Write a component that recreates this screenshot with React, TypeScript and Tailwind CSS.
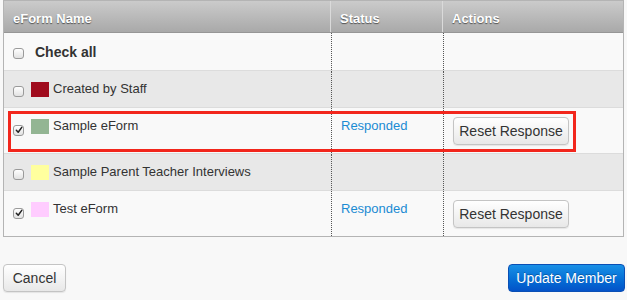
import React from "react";

function Check({ checked }: { checked?: boolean }) {
  return (
    <span className="inline-flex w-[11px] h-[11px] rounded-[3px] border border-[#9a9a9a] bg-gradient-to-b from-[#ffffff] to-[#e2e2e2] items-center justify-center shrink-0">
      {checked && (
        <svg width="8" height="8" viewBox="0 0 9 9">
          <path d="M1.5 4.8 L3.6 7 L7.6 1.6" fill="none" stroke="#222" strokeWidth="1.7" strokeLinecap="round" strokeLinejoin="round" />
        </svg>
      )}
    </span>
  );
}

type Row = { name: string; color?: string; checked?: boolean; responded?: boolean; bold?: boolean; alt?: boolean };

const rows: Row[] = [
  { name: "Check all", bold: true },
  { name: "Created by Staff", color: "#a00b1d", alt: true },
  { name: "Sample eForm", color: "#93b593", checked: true, responded: true },
  { name: "Sample Parent Teacher Interviews", color: "#ffff9e", alt: true },
  { name: "Test eForm", color: "#ffccff", checked: true, responded: true },
];

function ResetBtn() {
  return (
    <button className="h-[28px] w-[116px] rounded-[4px] border border-[#c4c4c4] bg-gradient-to-b from-[#ffffff] to-[#e8e8e8] text-[14px] text-[#333] shadow-[0_1px_1px_rgba(0,0,0,0.08)]">
      Reset Response
    </button>
  );
}

export default function App() {
  return (
    <div className="w-[627px] h-[300px] bg-[#f8f8f8] pl-[3px] font-['Liberation_Sans',Arial,sans-serif] text-[13px] text-[#333] relative">
      <div className="w-[621px] border border-[#b4b4b4]">
        <div className="flex h-[32px] bg-gradient-to-b from-[#cbcbcb] to-[#a9a9a9] border-b border-[#969696] text-white font-bold text-[13px] [text-shadow:0_1px_1px_rgba(0,0,0,0.55)]">
          <div className="w-[327px] pl-[9px] pt-[8px] border-r border-[#dadada]">eForm Name</div>
          <div className="w-[112px] pl-[9px] pt-[8px] border-r border-[#dadada]">Status</div>
          <div className="flex-1 pl-[9px] pt-[8px]">Actions</div>
        </div>
        {rows.map((r, i) => {
          const h = r.responded ? "h-[46px]" : "h-[37px]";
          return (
            <div key={i} className={`flex ${h} ${r.alt ? "bg-[#e8e8e8]" : "bg-[#f9f9f9]"} ${i > 0 ? "border-t border-[#dcdcdc]" : ""}`}>
              <div className="w-[327px] flex items-start pl-[9px] pt-[9px]">
                <span className="mt-[3px]"><Check checked={r.checked} /></span>
                {r.bold ? (
                  <span className="ml-[11px] font-bold text-[14px] leading-[18px] mt-[1px]">{r.name}</span>
                ) : (
                  <>
                    <span className="ml-[7px] w-[18px] h-[15px] shrink-0 mt-[2px]" style={{ backgroundColor: r.color }} />
                    <span className="ml-[4px] leading-[18px]">{r.name}</span>
                  </>
                )}
              </div>
              <div className="w-[112px] border-l border-dotted border-[#555] pl-[9px] pt-[9px] leading-[18px] text-[#1b8bd3]">
                {r.responded ? "Responded" : ""}
              </div>
              <div className="flex-1 border-l border-dotted border-[#555] pl-[9px] pt-[9px]">
                {r.responded && <ResetBtn />}
              </div>
            </div>
          );
        })}
      </div>
      <div className="absolute left-[8px] top-[111px] w-[568px] h-[41px] border-[3px] border-[#f2261c] pointer-events-none" />
      <div className="flex justify-between items-center mt-[27px] w-[622px]">
        <button className="h-[28px] w-[63px] rounded-[4px] border border-[#c4c4c4] bg-gradient-to-b from-[#ffffff] to-[#e8e8e8] text-[14px] text-[#333] shadow-[0_1px_1px_rgba(0,0,0,0.08)]">
          Cancel
        </button>
        <button className="h-[28px] w-[117px] rounded-[4px] border border-[#0a4fb5] bg-gradient-to-b from-[#1990e6] to-[#0452c8] text-[14px] text-white [text-shadow:0_-1px_0_rgba(0,0,0,0.25)]">
          Update Member
        </button>
      </div>
    </div>
  );
}
